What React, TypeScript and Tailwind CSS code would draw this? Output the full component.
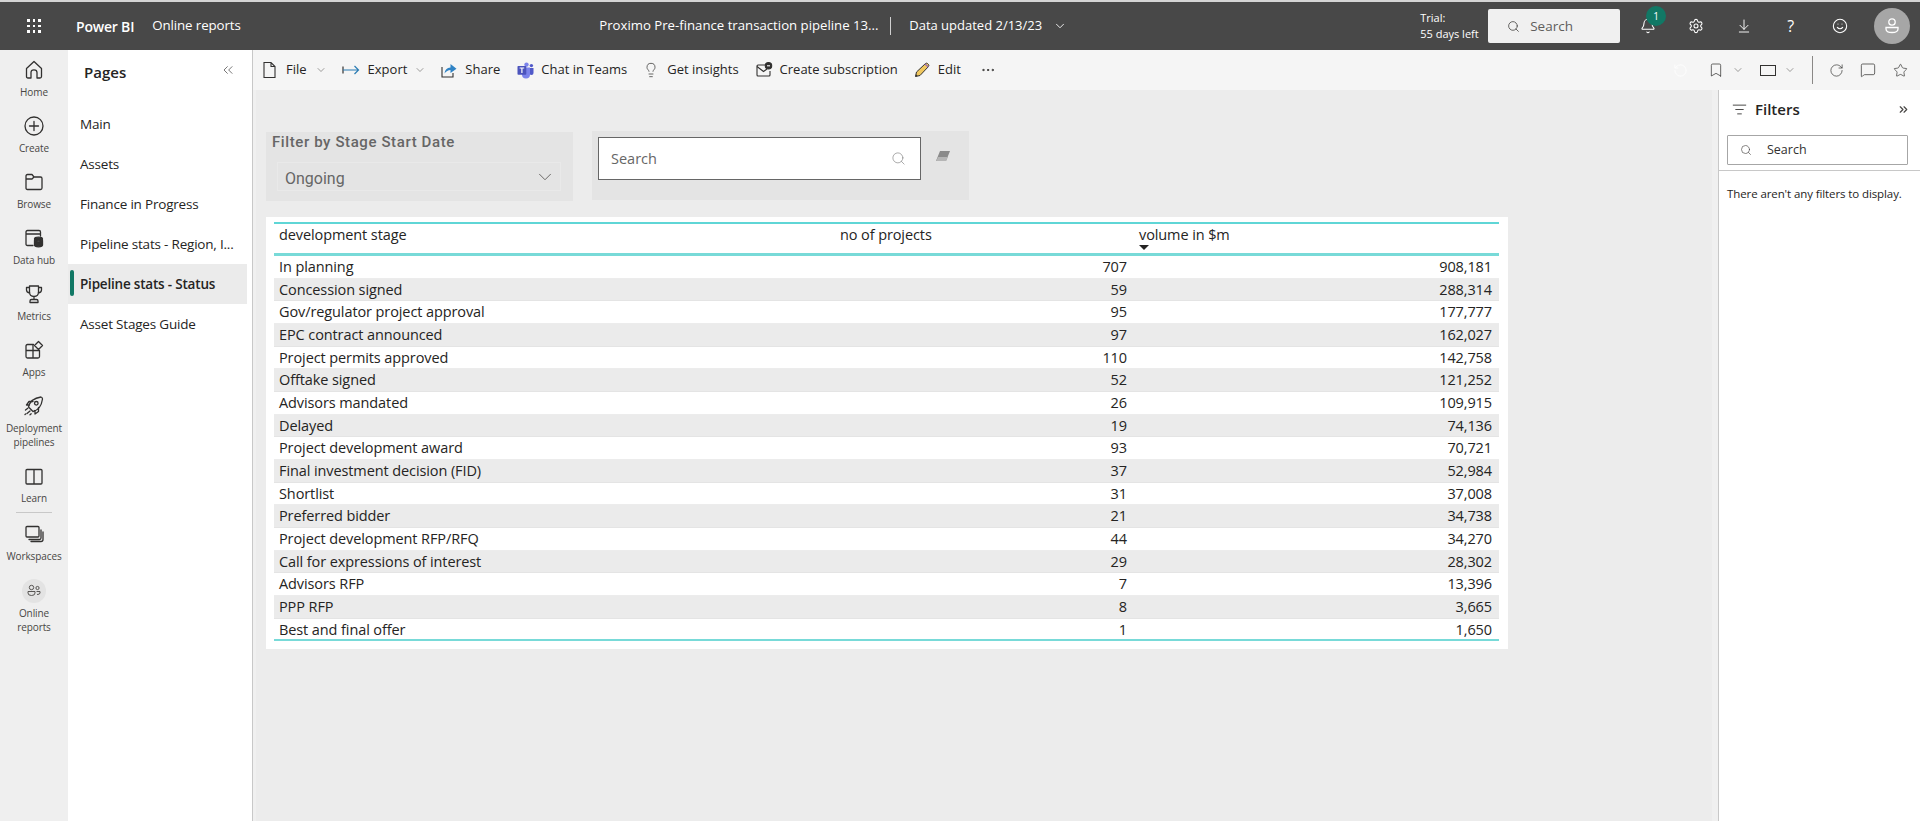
import React from 'react'
import {
  ArrowDownToLine,
  Bell,
  Bookmark,
  ChevronDown,
  ChevronsLeft,
  ChevronsRight,
  Ellipsis,
  Lightbulb,
  ListFilter,
  MessageSquare,
  RotateCcw,
  RotateCw,
  Search,
  Settings,
  Smile,
  Star,
} from 'lucide-react'

const rows = [
  ['In planning', '707', '908,181'],
  ['Concession signed', '59', '288,314'],
  ['Gov/regulator project approval', '95', '177,777'],
  ['EPC contract announced', '97', '162,027'],
  ['Project permits approved', '110', '142,758'],
  ['Offtake signed', '52', '121,252'],
  ['Advisors mandated', '26', '109,915'],
  ['Delayed', '19', '74,136'],
  ['Project development award', '93', '70,721'],
  ['Final investment decision (FID)', '37', '52,984'],
  ['Shortlist', '31', '37,008'],
  ['Preferred bidder', '21', '34,738'],
  ['Project development RFP/RFQ', '44', '34,270'],
  ['Call for expressions of interest', '29', '28,302'],
  ['Advisors RFP', '7', '13,396'],
  ['PPP RFP', '8', '3,665'],
  ['Best and final offer', '1', '1,650'],
]

const pages = ['Main', 'Assets', 'Finance in Progress', 'Pipeline stats - Region, I...', 'Pipeline stats - Status', 'Asset Stages Guide']

const Ico = ({ children, size = 20 }: { children: React.ReactNode; size?: number }) => (
  <svg width={size} height={size} viewBox="0 0 20 20" fill="none" stroke="#323130" strokeWidth="1.3" strokeLinejoin="round" strokeLinecap="round">
    {children}
  </svg>
)

const navItems: { label: string[]; icon: React.ReactNode }[] = [
  {
    label: ['Home'],
    icon: (
      <Ico>
        <path d="M10 1.5 L17.5 8.5 V16.5 Q17.5 18 16 18 H13 V12.5 Q13 9.8 10 9.8 Q7 9.8 7 12.5 V18 H4 Q2.5 18 2.5 16.5 V8.5 Z" />
      </Ico>
    ),
  },
  {
    label: ['Create'],
    icon: (
      <Ico>
        <circle cx="10" cy="10" r="9" />
        <path d="M10 5.5 V14.5 M5.5 10 H14.5" />
      </Ico>
    ),
  },
  {
    label: ['Browse'],
    icon: (
      <Ico>
        <path d="M2 4 Q2 2.5 3.5 2.5 H8 L10 5 H16.5 Q18 5 18 6.5 V16 Q18 17.5 16.5 17.5 H3.5 Q2 17.5 2 16 Z M2 7 H8 L10 5" />
      </Ico>
    ),
  },
  {
    label: ['Data hub'],
    icon: (
      <Ico>
        <path d="M9 17.5 H3.5 Q2 17.5 2 16 V4 Q2 2.5 3.5 2.5 H15 Q16.5 2.5 16.5 4 V8 M2 6 H16.5" />
        <ellipse cx="14.5" cy="11" rx="4" ry="1.8" fill="#323130" />
        <path d="M10.5 12.5 V17 Q10.5 18.8 14.5 18.8 Q18.5 18.8 18.5 17 V12.5 Q16.5 14 14.5 14 Q12.5 14 10.5 12.5 Z" fill="#323130" />
      </Ico>
    ),
  },
  {
    label: ['Metrics'],
    icon: (
      <Ico>
        <path d="M5.5 2 H14.5 V8 Q14.5 12.5 10 12.5 Q5.5 12.5 5.5 8 Z M5.5 3.5 H2.5 V6 Q2.5 8.5 5.8 9 M14.5 3.5 H17.5 V6 Q17.5 8.5 14.2 9 M10 12.5 V15.5 M6 18.5 V17 Q6 15.5 7.5 15.5 H12.5 Q14 15.5 14 17 V18.5 Z" />
      </Ico>
    ),
  },
  {
    label: ['Apps'],
    icon: (
      <Ico>
        <path d="M9.5 4.5 H3.5 Q2 4.5 2 6 V16.5 Q2 18 3.5 18 H14 Q15.5 18 15.5 16.5 V10.5 H2 M9 4.5 V18" />
        <path d="M14.5 1.5 L18.5 5.5 L14.5 9.5 L10.5 5.5 Z" />
      </Ico>
    ),
  },
  {
    label: ['Deployment', 'pipelines'],
    icon: (
      <Ico>
        <path d="M6.5 13 L4.5 11 Q6.5 2.5 17 1 Q18.5 1.5 18.5 3 Q17 13.5 9 15.5 Z M5.5 9 L2.5 9 L5 5.5 H9 M11 14.5 V18 L14.5 15.5 V11.5" />
        <circle cx="12.3" cy="7.3" r="1.8" />
        <path d="M1.5 14 L3.8 12.2 M3 17.5 L6 15 M1 18.5 L1.6 18 M6 18.8 L7.2 17.8" />
      </Ico>
    ),
  },
  {
    label: ['Learn'],
    icon: (
      <Ico>
        <path d="M2 4.5 Q2 3.5 3 3.5 H17 Q18 3.5 18 4.5 V17 Q18 18 17 18 H3 Q2 18 2 17 Z M10 3.5 V18" />
      </Ico>
    ),
  },
]

const ToolText = ({ children }: { children: React.ReactNode }) => <span className="block pb-[1px] text-[13px] text-[#252423] whitespace-nowrap">{children}</span>

const Chev = ({ className }: { className: string }) => <ChevronDown size={12} strokeWidth={1.2} color="#605e5c" className={className} />

const FileIcon = () => (
  <svg width="16" height="18" viewBox="0 0 16 18" fill="none" stroke="#323130" strokeWidth="1.1">
    <path d="M3 1.5 H10 L14 5.5 V16.5 H3 Z M10 1.5 V5.5 H14" />
  </svg>
)

const ExportIcon = () => (
  <svg width="18" height="12" viewBox="0 0 18 12" fill="none" strokeWidth="1.2">
    <path d="M1 2.5 V9.5" stroke="#323130" />
    <path d="M1 6 H16.5 M12.5 2 L16.5 6 L12.5 10" stroke="#2b7cb3" />
  </svg>
)

const ShareIcon = () => (
  <svg width="16" height="16" viewBox="0 0 16 16" fill="none">
    <path d="M1 5 V15 H12 V11" stroke="#323130" strokeWidth="1.1" />
    <path d="M3.5 11.5 Q4 6 9.5 5.5 V2 L15.5 6.8 L9.5 11 V8 Q6 8 3.5 11.5 Z" fill="#2f83c5" />
  </svg>
)

const TeamsIcon = () => (
  <svg width="17" height="17" viewBox="0 0 17 17">
    <circle cx="9.5" cy="2.6" r="2.2" fill="#7b83eb" />
    <circle cx="14.4" cy="3.6" r="1.7" fill="#5059c9" />
    <path d="M11 6 H16.5 V11 Q16.5 13 14.5 13 Q12 13 12 11 Z" fill="#5059c9" />
    <path d="M5 5.5 H13 V12.5 Q13 16.5 9 16.5 Q5 16.5 5 12.5 Z" fill="#7b83eb" />
    <rect x="0.5" y="4" width="8.8" height="8.8" rx="0.8" fill="#4b53bc" />
    <path d="M2.6 6 H7.2 M4.9 6 V11" stroke="#fff" strokeWidth="1.2" fill="none" />
  </svg>
)

const MailIcon = () => (
  <svg width="17" height="16" viewBox="0 0 17 16" fill="none" stroke="#323130" strokeWidth="1.1">
    <path d="M9 3 H2 Q1 3 1 4 V13 Q1 14 2 14 H13 Q14 14 14 13 V9" />
    <path d="M1 4.5 L7.5 9.5 L11 7" />
    <circle cx="12.5" cy="3.8" r="3.2" fill="#323130" />
    <path d="M11 3.8 H14" stroke="#fff" />
  </svg>
)

const PencilIcon = () => (
  <svg width="16" height="16" viewBox="0 0 16 16">
    <path d="M1.5 14.5 L2.5 10 L11.5 1.5 Q12.5 0.8 13.5 1.5 L14.5 2.5 Q15.2 3.5 14.5 4.5 L6 13.5 Z" fill="#f0c75e" stroke="#323130" strokeWidth="1" />
    <path d="M11 2 L14.3 5" stroke="#9b6fb5" strokeWidth="1.4" />
    <path d="M1.5 14.5 L2 12.3 L3.7 14 Z" fill="#323130" />
  </svg>
)

export default function App() {
  return (
    <div className="w-[1920px] h-[821px] overflow-hidden flex flex-col font-['Open_Sans','Noto_Sans',sans-serif] text-[#252423] bg-white">
      {/* top bar */}
      <header className="h-[50px] shrink-0 border-t-2 border-[#d4d4d4] bg-[#484848] text-white flex items-center">
        <div className="w-[68px] flex justify-center">
          <div className="grid grid-cols-3 gap-[3px]">
            {Array.from({ length: 9 }).map((_, i) => (
              <span key={i} className="w-[2.5px] h-[2.5px] bg-white" />
            ))}
          </div>
        </div>
        <span className="ml-[8px] text-[14px] font-semibold tracking-[-0.2px]">Power BI</span>
        <span className="ml-[18px] w-[89px] text-[13.3px] tracking-[-0.1px] whitespace-nowrap">Online reports</span>
        <span className="ml-[358px] w-[279px] text-[13.2px] whitespace-nowrap">Proximo Pre-finance transaction pipeline 13...</span>
        <span className="ml-[12px] w-px h-[18px] bg-[#d0d0d0]" />
        <span className="ml-[18px] w-[136px] text-[13px] whitespace-nowrap">Data updated 2/13/23</span>
        <ChevronDown size={14} strokeWidth={1.5} className="ml-[8px]" />
        <div className="ml-[353px] text-[11px] leading-[16px] whitespace-nowrap w-[68px]">
          Trial:
          <br />
          55 days left
        </div>
        <div className="w-[132px] h-[34px] bg-[#f0f0f0] rounded-[2px] flex items-center pl-[19px]">
          <Search size={13} color="#484644" strokeWidth={1.5} />
          <span className="ml-[10px] text-[13.5px] text-[#605e5c]">Search</span>
        </div>
        <div className="relative ml-[20px]">
          <Bell size={16} strokeWidth={1.6} />
          <span className="absolute -top-[12px] left-[-2px] ml-[8px] w-[20px] h-[20px] rounded-full bg-[#117865] text-[10px] flex items-center justify-center">1</span>
        </div>
        <Settings size={16} strokeWidth={1.6} className="ml-[32px]" />
        <ArrowDownToLine size={16} strokeWidth={1.4} className="ml-[32px]" />
        <span className="ml-[35px] w-[10px] text-[16px]">?</span>
        <Smile size={16} strokeWidth={1.6} className="ml-[35px]" />
        <div className="ml-[26px] w-[36px] h-[36px] rounded-full bg-[#a6a6a6] flex items-center justify-center">
          <svg width="16" height="18" viewBox="0 0 16 18" fill="none" stroke="#fff" strokeWidth="1.3">
            <circle cx="8" cy="5" r="3.2" />
            <path d="M2 10.5 H14 V12 Q14 15.5 8 15.5 Q2 15.5 2 12 Z" />
          </svg>
        </div>
      </header>

      <div className="flex flex-1 min-h-0">
        {/* left nav */}
        <nav className="w-[68px] shrink-0 bg-[#efefef] flex flex-col items-center">
          {navItems.map((item) => (
            <div key={item.label[0]} className={item.label.length > 1 ? 'h-[70px] w-full flex flex-col items-center pt-[10px]' : 'h-[56px] w-full flex flex-col items-center pt-[10px]'}>
              {item.icon}
              <div className="mt-[5px] text-center text-[10px] leading-[14px] tracking-[-0.1px] text-[#484644]">
                {item.label.map((l) => (
                  <div key={l}>{l}</div>
                ))}
              </div>
            </div>
          ))}
          <div className="w-[36px] h-px bg-[#c8c8c8]" />
          <div className="pt-[11px] h-[66px] flex flex-col items-center">
            <Ico>
              <path d="M2 3.5 Q2 2.5 3 2.5 H14 Q15 2.5 15 3.5 V12 Q15 13 14 13 H3 Q2 13 2 12 Z M17 6 V14 Q17 15.5 15.5 15.5 H5 M19 8 V15.5 Q19 17.5 17 17.5 H7" />
            </Ico>
            <div className="mt-[5px] text-[10px] leading-[14px] tracking-[-0.1px] text-[#484644]">Workspaces</div>
          </div>
          <div className="w-[24px] h-[24px] rounded-full bg-[#e3e3e3] flex items-center justify-center">
            <svg width="14" height="14" viewBox="0 0 14 14" fill="none" stroke="#484644" strokeWidth="0.9">
              <circle cx="4.5" cy="3.5" r="2.2" />
              <circle cx="10.5" cy="4" r="1.6" />
              <path d="M1 7.5 H8 V9 Q8 11.5 4.5 11.5 Q1 11.5 1 9 Z M9.5 7.5 H13 V9 Q13 10.5 10 10.5" />
            </svg>
          </div>
          <div className="mt-[3px] text-center text-[10px] leading-[14px] tracking-[-0.1px] text-[#484644]">
            <div>Online</div>
            <div>reports</div>
          </div>
        </nav>

        {/* pages pane */}
        <aside className="w-[185px] shrink-0 border-r border-[#c8c8c8] bg-white">
          <div className="h-[54px] flex items-start justify-between pl-[16px] pr-[16px] pt-[12px]">
            <span className="text-[15px] leading-[20px] font-semibold text-[#252423]">Pages</span>
            <ChevronsLeft size={16} strokeWidth={1} color="#323130" />
          </div>
          <div className="pr-[5px]">
            {pages.map((p) => {
              const active = p === 'Pipeline stats - Status'
              return (
                <div key={p} className={active ? 'relative h-[40px] flex items-center pl-[12px] bg-[#ebebeb] font-semibold text-[13.5px] tracking-[-0.2px] whitespace-nowrap' : 'h-[40px] flex items-center pl-[12px] text-[13.5px] tracking-[-0.2px] whitespace-nowrap'}>
                  {active && <span className="absolute left-[2px] top-[6px] w-[4px] h-[26px] rounded-[2px] bg-[#117865]" />}
                  {p}
                </div>
              )
            })}
          </div>
        </aside>

        {/* report area */}
        <div className="flex-1 min-w-0 flex flex-col">
          <div className="h-[40px] shrink-0 bg-[#f5f5f5] flex items-center pl-[8px]">
            <FileIcon />
            <span className="ml-[9px]"><ToolText>File</ToolText></span>
            <Chev className="ml-[8px]" />
            <span className="ml-[15px]"><ExportIcon /></span>
            <span className="ml-[8px]"><ToolText>Export</ToolText></span>
            <Chev className="ml-[7px]" />
            <span className="ml-[15px]"><ShareIcon /></span>
            <span className="ml-[8px]"><ToolText>Share</ToolText></span>
            <span className="ml-[17px]"><TeamsIcon /></span>
            <span className="ml-[7px]"><ToolText>Chat in Teams</ToolText></span>
            <Lightbulb size={16} strokeWidth={1.1} color="#323130" className="ml-[16px]" />
            <span className="ml-[8px]"><ToolText>Get insights</ToolText></span>
            <span className="ml-[17px]"><MailIcon /></span>
            <span className="ml-[7px]"><ToolText>Create subscription</ToolText></span>
            <span className="ml-[16px]"><PencilIcon /></span>
            <span className="ml-[8px]"><ToolText>Edit</ToolText></span>
            <Ellipsis size={16} strokeWidth={1.5} color="#323130" className="ml-[19px]" />
            <RotateCcw size={15} strokeWidth={1.2} color="#ffffff" className="ml-auto" />
            <Bookmark size={16} strokeWidth={1.1} color="#323130" className="ml-[20px]" />
            <Chev className="ml-[8px]" />
            <span className="ml-[16px] w-[16px] h-[11px] border border-[#323130]" />
            <Chev className="ml-[8px]" />
            <span className="ml-[16px] w-px h-[28px] bg-[#8a8886]" />
            <RotateCw size={15} strokeWidth={1.1} color="#323130" className="ml-[16px]" />
            <MessageSquare size={16} strokeWidth={1.1} color="#323130" className="ml-[16px]" />
            <Star size={15} strokeWidth={1.1} color="#323130" className="ml-[17px] mr-[12px]" />
          </div>

          <div className="flex-1 min-h-0 flex">
            {/* canvas */}
            <main className="flex-1 min-w-0 bg-[#f0f0f0] pl-[3px] pr-[6px]">
              <div className="h-full bg-[#ececec] pt-[41px] pl-[10px]">
                <div className="flex items-start">
                  <div className="mt-px w-[307px] h-[69px] bg-[#e4e4e4] pl-[6px] pr-[12px] font-['Roboto',sans-serif]">
                    <div className="h-[20px] text-[15px] font-medium text-[#666666] tracking-[0.6px] whitespace-nowrap flex items-center">Filter by Stage Start Date</div>
                    <div className="mt-[10px] ml-[5px] h-[29px] border border-[#e9e9e9] flex items-center justify-between pl-[7px] pr-[4px] text-[16px] text-[#666666]">
                      <span className="pt-[5px]">Ongoing</span>
                      <ChevronDown size={22} strokeWidth={1} color="#605e5c" />
                    </div>
                  </div>
                  <div className="ml-[19px] w-[377px] h-[69px] bg-[#e4e4e4] pl-[6px] pt-[6px] flex items-start">
                    <div className="w-[323px] h-[43px] bg-white border border-[#666666] flex items-center justify-between pl-[12px] pr-[14px]">
                      <span className="text-[14.5px] text-[#666666]">Search</span>
                      <Search size={15} strokeWidth={1} color="#7a7a7a" />
                    </div>
                    <svg width="16" height="14" viewBox="0 0 16 14" className="ml-[14px] mt-[13px]">
                      <path d="M5 1 H15 L11 11 H1 Z" fill="#8a8a8a" />
                      <path d="M3.2 7 H13 L11 11 H1 Z" fill="#b5b5b5" />
                    </svg>
                  </div>
                </div>

                <div className="mt-[16px] w-[1242px] h-[432px] bg-white pt-[5px] pl-[8px]">
                  <div className="w-[1225px] text-[14.5px] tracking-[-0.1px] text-[#252423]">
                    <div className="h-[34px] border-t-2 border-b-[3px] border-t-[#5fd6d6] border-b-[#78dad8] grid grid-cols-[560px_299px_366px]">
                      <div className="pl-[5px]">development stage</div>
                      <div className="pl-[6px]">no of projects</div>
                      <div className="relative pl-[6px]">
                        volume in $m
                        <span className="absolute left-[6px] top-[21px] w-0 h-0 border-x-[5px] border-x-transparent border-t-[5px] border-t-[#252423]" />
                      </div>
                    </div>
                    {rows.map((r, i) => (
                      <div key={r[0]} className={i % 2 === 1 ? 'h-[22.66px] leading-[22px] bg-[#ebebeb] border-b border-[#e4e4e4] grid grid-cols-[560px_299px_366px]' : 'h-[22.66px] leading-[22px] bg-white border-b border-[#ececec] grid grid-cols-[560px_299px_366px]'}>
                        <div className="pl-[5px]">{r[0]}</div>
                        <div className="pr-[6px] text-right">{r[1]}</div>
                        <div className="pr-[7px] text-right">{r[2]}</div>
                      </div>
                    ))}
                    <div className="h-[2px] bg-[#78dad8] -mt-[2px] relative" />
                  </div>
                </div>
              </div>
            </main>

            {/* filters pane */}
            <aside className="w-[202px] shrink-0 border-l border-[#c8c8c8] bg-white">
              <div className="h-[45px] flex items-center pl-[13px] pr-[10px] pb-[6px]">
                <ListFilter size={15} strokeWidth={1.4} color="#323130" />
                <span className="ml-[8px] text-[15px] font-semibold">Filters</span>
                <ChevronsRight size={13} strokeWidth={2.2} color="#484644" className="ml-auto" />
              </div>
              <div className="border-b border-[#c8c8c8] h-[36px] pl-[8px]">
                <div className="w-[181px] h-[30px] border border-[#a6a6a6] rounded-[1px] flex items-center pl-[12px]">
                  <Search size={12} strokeWidth={1.3} color="#484644" />
                  <span className="ml-[15px] text-[12.5px] text-[#323130]">Search</span>
                </div>
              </div>
              <div className="pl-[8px] pt-[14px] text-[11.5px] tracking-[-0.1px] whitespace-nowrap text-[#252423]">There aren't any filters to display.</div>
            </aside>
          </div>
        </div>
      </div>
    </div>
  )
}
